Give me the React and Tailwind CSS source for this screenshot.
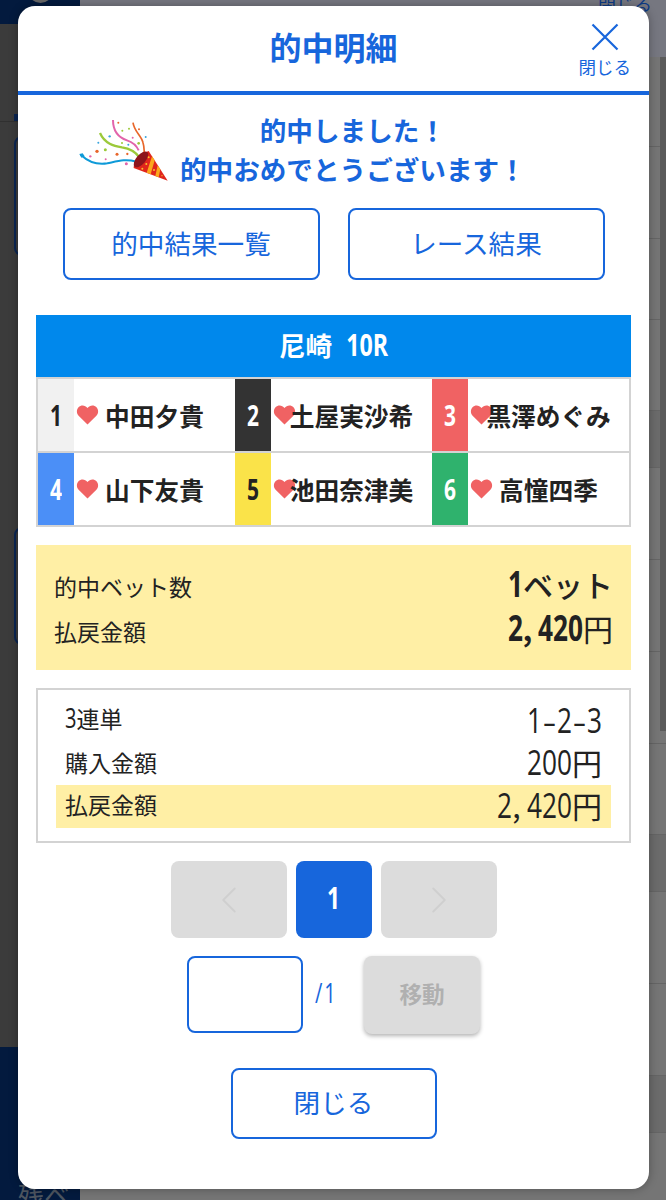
import { ChevronLeft, ChevronRight } from "lucide-react";

const racers = [
  { no: 1, name: "中田夕貴", color: "bg-[#f1f1f1] text-[#222]" },
  { no: 2, name: "土屋実沙希", color: "bg-[#333] text-white" },
  { no: 3, name: "黒澤めぐみ", color: "bg-[#f06263] text-white" },
  { no: 4, name: "山下友貴", color: "bg-[#4b8ff7] text-white" },
  { no: 5, name: "池田奈津美", color: "bg-[#fae349] text-[#222]" },
  { no: 6, name: "高憧四季", color: "bg-[#2fb26d] text-white" },
];

// rows of the list behind the dialog
const rows = [
  "h-[90px]",
  "h-[92px]",
  "h-[81px]",
  "h-[91px]",
  "h-[57px] bg-[#6b6b6b]",
  "h-[92px]",
  "h-[92px]",
  "h-[92px]",
  "h-[91px]",
  "h-[57px] bg-[#6b6b6b]",
  "h-[92px]",
  "h-[92px]",
  "h-[57px] bg-[#6b6b6b]",
  "h-[68px]",
];

// tall half-width digits, separators keep a half-width cell
function Num({ children, className = "" }) {
  return (
    <span className={className}>
      {String(children)
        .split(/([,-])/)
        .map((part, i) =>
          part === "," || part === "-" ? (
            <span
              key={i}
              className={`inline-block w-[0.5em] leading-none [font-feature-settings:'hwid'] ${
                part === "," ? "-indent-[3px]" : "scale-x-[1.2]"
              }`}
            >
              {part}
            </span>
          ) : (
            <span
              key={i}
              className="inline-block origin-[50%_84%] scale-y-[1.33] font-['Open_Sans',sans-serif] text-[0.874em] leading-none"
            >
              {part}
            </span>
          )
        )}
    </span>
  );
}

function Heart() {
  return (
    <svg viewBox="0 0 22 20" className="absolute left-[2px] top-[26px] h-[20px] w-[23px]" fill="#f06263">
      <path d="M11 19.5 2.1 10.8C-.2 8.5-.1 4.500 2 2.200 4.600-.4 8.700-.1 11 3c2.300-3.100 6.400-3.400 9-.8 2.100 2.300 2.200 6.300-.1 8.600z" />
    </svg>
  );
}

function Cracker() {
  return (
    <svg viewBox="0 0 330 240" className="h-[80px] w-[110px]" fill="none">
      <path d="M32 134C58 158 84 165 112 160C145 153 165 146 200 155" stroke="#0e9ad8" strokeWidth="6" />
      <path d="M90 69C104 101 132 108 156 112C184 116 198 127 208 142" stroke="#9cc93a" strokeWidth="7" />
      <path d="M129 30C129 64 147 83 171 91C190 97 200 108 206 121" stroke="#e264ab" strokeWidth="6" />
      <path d="M189 38C193 66 214 76 219 98C223 110 222 120 223 130" stroke="#e8662a" strokeWidth="5" />
      <path d="M28 132l10-2 6 9-10 4z" fill="#0e9ad8" />
      <path d="M236 123L293 212L191 174C190 155 211 130 236 123Z" fill="#e0261c" />
      <ellipse cx="213" cy="148" rx="29" ry="14" transform="rotate(-49 213 148)" fill="#8d141c" />
      <path d="M246 139l8 12-12 42-12-5zM263 166l8 12-5 24-10-4z" fill="#fba81c" />
      <g fill="#fbc02d">
        <circle cx="236" cy="142" r="3" />
        <circle cx="229" cy="162" r="3" />
        <circle cx="217" cy="176" r="3" />
        <circle cx="252" cy="180" r="3" />
        <circle cx="276" cy="197" r="2" />
      </g>
      <g fill="#e8662a">
        <circle cx="81" cy="124" r="5" />
        <circle cx="141" cy="133" r="4.500" />
        <circle cx="172" cy="132" r="3.500" />
        <circle cx="145" cy="38" r="3" />
        <circle cx="207" cy="58" r="3" />
      </g>
      <g fill="#9cc93a">
        <circle cx="106" cy="119" r="4.500" />
        <circle cx="156" cy="99" r="3" />
        <circle cx="157" cy="62" r="3" />
        <circle cx="177" cy="56" r="3" />
        <circle cx="206" cy="100" r="4" />
      </g>
      <g fill="#3aa5dd">
        <circle cx="85" cy="98" r="3" />
        <circle cx="119" cy="79" r="3.500" />
        <circle cx="175" cy="104" r="3" />
        <circle cx="227" cy="81" r="3" />
      </g>
      <g fill="#e264ab">
        <circle cx="61" cy="139" r="3.500" />
        <circle cx="107" cy="148" r="3" />
        <circle cx="169" cy="161" r="4.500" />
        <circle cx="188" cy="83" r="3" />
      </g>
    </svg>
  );
}

export default function App() {
  return (
    <div className="relative h-[1200px] w-[666px] overflow-hidden bg-[#757575] font-['Noto_Sans_CJK_JP',sans-serif] text-[#222]">
      {/* page behind the dialog */}
      <div className="flex h-full">
        <div className="flex w-20 flex-col bg-[#3b3b3b]">
          <div className="flex h-6 justify-center bg-[#031a3e]">
            <div className="-mt-[22px] h-[25px] w-[25px] rounded-full bg-[#666]" />
          </div>
          <div className="flex h-[98px] items-end border-b border-[#303030] pl-[14px]">
            <div className="h-[7px] w-10 bg-[#0a2552]" />
          </div>
          <div className="ml-[14px] mt-[14px] h-[120px] rounded-lg border-2 border-[#0a2552]" />
          <div className="ml-[14px] mt-[271px] h-[118px] rounded-lg border-2 border-[#0a2552]" />
          <div className="mt-auto flex h-[153px] items-end overflow-hidden bg-[#031a3e] pl-[18px] text-[26px] leading-[26px] text-[#4d5560]">
            <span className="-mb-2 whitespace-nowrap">残ベ</span>
          </div>
        </div>
        <div className="flex-1">
          <div className="h-[57px] bg-[#767780] pr-[14px] text-right text-[18px] leading-[6px] text-[#0c3a85]">
            閉じる
          </div>
          <div className="flex">
            <div className="flex-1">
              {rows.map((row, i) => (
                <div key={i} className={`border-b border-[#656565] ${row}`} />
              ))}
            </div>
            <div className="-ml-[6px] h-[674px] w-[6px] bg-[#5b5b5b]" />
          </div>
        </div>
      </div>

      {/* dialog */}
      <div className="absolute left-[18px] top-[6px] flex h-[1183px] w-[631px] flex-col rounded-[17px] bg-white shadow-[0_0_10px_rgba(0,0,0,0.3)]">
        <div className="relative flex h-[89px] items-center justify-center border-b-4 border-[#1766dc] pb-[5px] text-[#1766dc]">
          <h1 className="text-[32px] font-bold leading-none">的中明細</h1>
          <button className="absolute right-[18px] top-[17px] flex flex-col items-center">
            <svg viewBox="0 0 28 28" className="h-7 w-7" stroke="currentColor" strokeWidth="2.2">
              <path d="M1.500 1.500 26.500 26.500M26.500 1.500 1.500 26.500" />
            </svg>
            <span className="mt-[7px] text-[17.500px] leading-[18px]">閉じる</span>
          </button>
        </div>

        <div className="flex flex-col px-[18px]">
          <div className="mt-[15px] flex h-20 pl-[34px] text-[#1766dc]">
            <Cracker />
            <p className="text-center text-[26.600px] font-bold leading-[39px]">
              的中しました！
              <br />
              的中おめでとうございます！
            </p>
          </div>

          <div className="mt-[18px] flex justify-center gap-7 text-[26.600px] text-[#1766dc]">
            <button className="h-[72px] w-[257px] rounded-lg border-2 border-[#1766dc] pb-[3px]">的中結果一覧</button>
            <button className="h-[72px] w-[257px] rounded-lg border-2 border-[#1766dc] pb-[3px]">レース結果</button>
          </div>

          <div className="mt-[35px] flex h-[62px] items-baseline justify-center gap-[14px] bg-[#0088ec] pt-[10px] text-[26.600px] font-bold text-white">
            尼崎 <Num>10R</Num>
          </div>
          <div className="grid grid-cols-3 border-2 border-t-0 border-[#d3d3d3]">
            {racers.map((r) => (
              <div key={r.no} className="flex h-[74px] border-t-2 border-[#d3d3d3]">
                <div className={`flex w-9 items-center justify-center pt-px text-2xl font-bold ${r.color}`}>
                  <Num>{r.no}</Num>
                </div>
                <div className="relative flex flex-1 items-center justify-center">
                  <Heart />
                  <span className="relative whitespace-nowrap pt-px text-[24.700px] font-bold">{r.name}</span>
                </div>
              </div>
            ))}
          </div>

          <div className="mt-[18px] flex h-[125px] flex-col justify-center bg-[#ffefa5] px-[18px]">
            <div className="flex h-[44px] items-center justify-between">
              <span className="pt-[2px] text-[23px]">的中ベット数</span>
              <span className="pb-[3px] text-[30px]">
                <Num className="font-bold">1</Num>
                <span className="font-medium">ベット</span>
              </span>
            </div>
            <div className="flex h-[44px] items-center justify-between">
              <span className="pt-[3px] text-[23px]">払戻金額</span>
              <span className="pb-[3px] text-[30px]">
                <Num className="font-bold">2,420</Num>円
              </span>
            </div>
          </div>

          <div className="mt-[18px] flex h-[155px] flex-col border-2 border-[#d3d3d3] px-[18px] pt-[8px]">
            <div className="flex h-[44px] items-center justify-between px-[9px]">
              <span className="pb-[4px] text-[23px]">
                <Num>3</Num>連単
              </span>
              <Num className="text-[30px]">1-2-3</Num>
            </div>
            <div className="flex h-[43px] items-center justify-between px-[9px]">
              <span className="pb-[3px] text-[23px]">購入金額</span>
              <span className="pb-[2px] text-[30px]">
                <Num>200</Num>円
              </span>
            </div>
            <div className="flex h-[43px] items-center justify-between bg-[#ffefa5] px-[9px]">
              <span className="pb-[4px] text-[23px]">払戻金額</span>
              <span className="pb-[2px] text-[30px]">
                <Num>2,420</Num>円
              </span>
            </div>
          </div>

          <div className="mt-[18px] flex justify-center gap-[9px]">
            <button className="flex h-[77px] w-[116px] items-center justify-center rounded-lg bg-[#dcdcdc] text-[#cfcfcf]">
              <ChevronLeft size={46} strokeWidth={1} />
            </button>
            <button className="h-[77px] w-[76px] rounded-lg bg-[#1766dc] pb-[4px] text-[26px] font-bold text-white">
              <Num>1</Num>
            </button>
            <button className="flex h-[77px] w-[116px] items-center justify-center rounded-lg bg-[#dcdcdc] text-[#cfcfcf]">
              <ChevronRight size={46} strokeWidth={1} />
            </button>
          </div>

          <div className="mt-[18px] flex h-[79px] items-start justify-center">
            <input className="h-[77px] w-[116px] rounded-lg border-2 border-[#1766dc]" />
            <span className="ml-[12px] w-[49px] pt-[20px] text-[23px] tracking-[2px] text-[#1766dc]">
              <Num>/1</Num>
            </span>
            <button className="h-[78px] w-[116px] rounded-lg bg-[#dcdcdc] pb-[3px] text-[22.600px] font-bold text-[#b0b0b0] shadow-[0_2px_4px_rgba(0,0,0,0.3)]">
              移動
            </button>
          </div>

          <button className="mx-auto mt-[33px] h-[71px] w-[206px] rounded-lg border-2 border-[#1766dc] pb-[3px] text-[26.600px] text-[#1766dc]">
            閉じる
          </button>
        </div>
      </div>
    </div>
  );
}
